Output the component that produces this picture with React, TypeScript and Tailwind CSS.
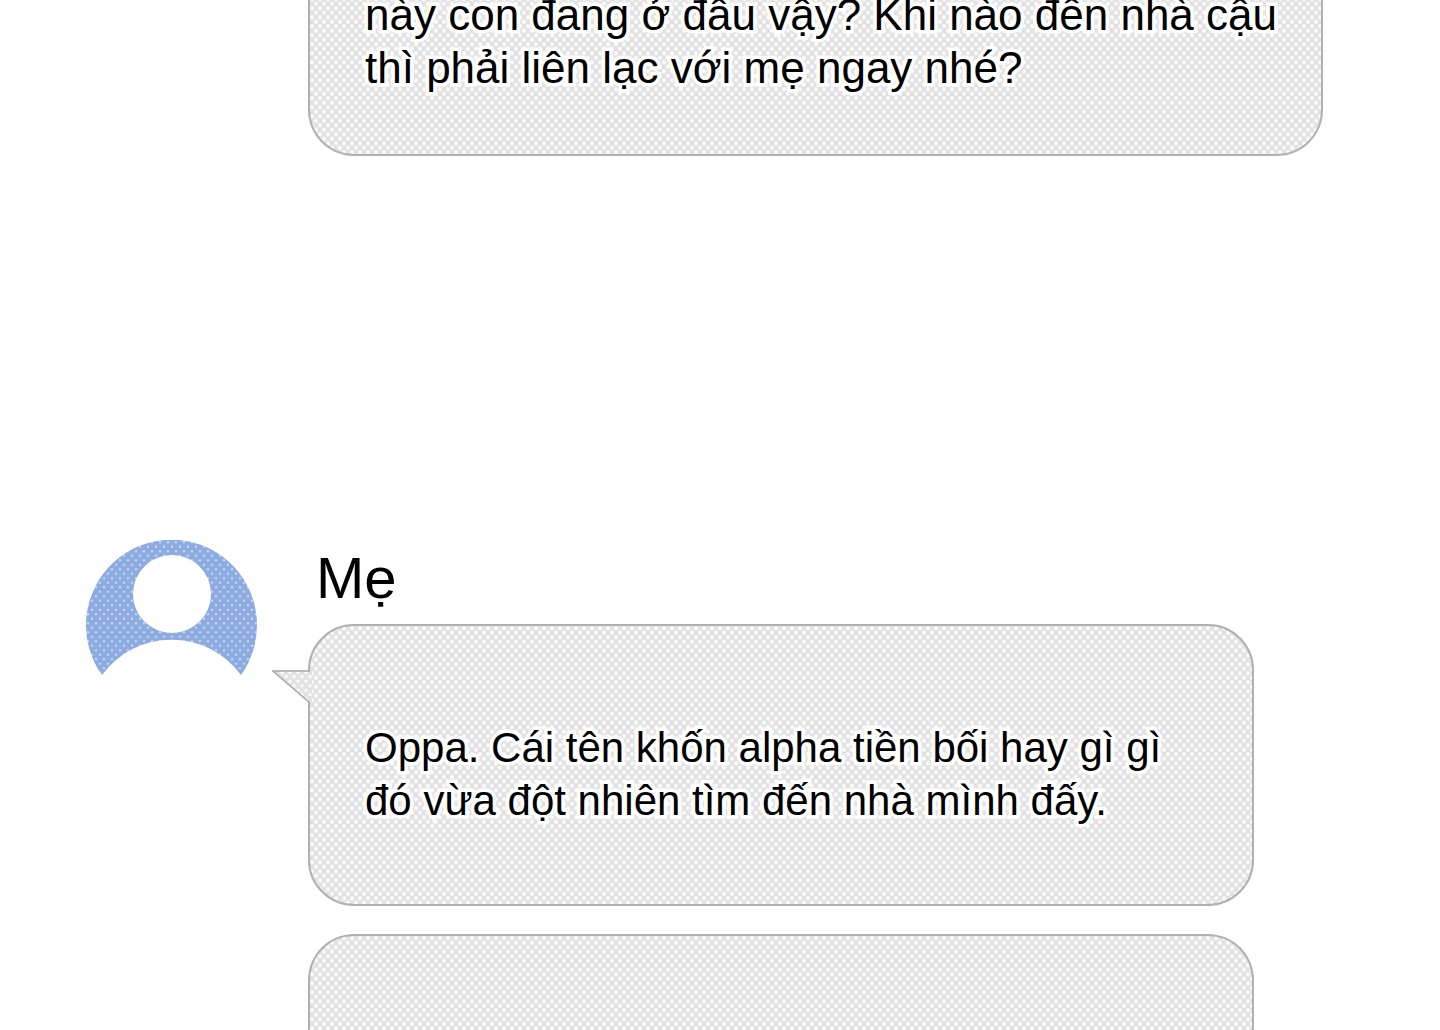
import type { ReactNode } from 'react';

const DOTS =
  'bg-[#e1e1e1] bg-[radial-gradient(circle_at_25%_25%,#fdfdfd_1px,transparent_3px),radial-gradient(circle_at_75%_75%,#fdfdfd_1px,transparent_3px)] bg-size-[8px_9px]';

const OUTLINED = 'whitespace-nowrap leading-[53px] [-webkit-text-stroke:7px_white] [paint-order:stroke_fill]';

function Avatar() {
  return (
    <svg viewBox="0 0 172 136" className="h-[136px] w-[172px]" role="img" aria-label="Mẹ">
      <defs>
        <pattern id="avatar-dots" width="8" height="9" patternUnits="userSpaceOnUse">
          <rect width="8" height="9" fill="#8eabe0" />
          <circle cx="2" cy="2.2" r="1.3" fill="#bcd2f8" />
          <circle cx="6" cy="6.7" r="1.3" fill="#bcd2f8" />
        </pattern>
      </defs>
      <path
        d="M16 135 A85.5 85.5 0 1 1 155 135 A86 86 0 0 0 16 135 Z M86 15 A39 39 0 1 0 86 93 A39 39 0 1 0 86 15 Z"
        fill="url(#avatar-dots)"
        fillRule="evenodd"
      />
    </svg>
  );
}

function Tail() {
  return (
    <svg viewBox="0 0 40 34" className="absolute top-[44px] -left-[38px] h-[34px] w-[40px]" aria-hidden="true">
      <defs>
        <pattern id="tail-dots" width="8" height="9" patternUnits="userSpaceOnUse">
          <rect width="8" height="9" fill="#e3e3e3" />
          <circle cx="2" cy="2.2" r="1.8" fill="#fafafa" />
          <circle cx="6" cy="6.7" r="1.8" fill="#fafafa" />
        </pattern>
      </defs>
      <path d="M40 1 H1 L38 33 H40 Z" fill="url(#tail-dots)" />
      <path d="M38 1 H1 L38 33" fill="none" stroke="#a8a8a8" strokeWidth="1.5" />
    </svg>
  );
}

function Bubble({ className, children }: { className: string; children?: ReactNode }) {
  return <div className={`relative border-2 border-[#b2b1b0] pl-[55px] ${DOTS} ${className}`}>{children}</div>;
}

export default function App() {
  return (
    <main className="flex h-screen w-full flex-col overflow-hidden bg-white font-['Liberation_Sans',Arial,sans-serif] text-black">
      <section className="pr-[117px] pl-[308px]">
        <Bubble className="rounded-b-[46px] border-t-0 pb-[60px]">
          {/* first visible line is scrolled partly out of view */}
          <p className={`-mt-[12px] text-[44px] ${OUTLINED}`}>
            này con đang ở đâu vậy? Khi nào đến nhà cậu
            <br />
            thì phải liên lạc với mẹ ngay nhé?
          </p>
        </Bubble>
      </section>

      <section className="mt-[384px] flex flex-1 pr-[186px] pl-[86px]">
        <div className="w-[222px] shrink-0">
          <Avatar />
        </div>
        <div className="flex flex-1 flex-col">
          <h2 className="pt-[5px] pl-[8px] text-[58px] leading-[66px]">Mẹ</h2>
          <Bubble className="mt-[13px] rounded-[46px] pt-[95px] pb-[77px]">
            <Tail />
            <p className={`text-[42px] ${OUTLINED}`}>
              Oppa. Cái tên khốn alpha tiền bối hay gì gì
              <br />
              đó vừa đột nhiên tìm đến nhà mình đấy.
            </p>
          </Bubble>
          <Bubble className="mt-[28px] flex-1 rounded-t-[46px] border-b-0" />
        </div>
      </section>
    </main>
  );
}
